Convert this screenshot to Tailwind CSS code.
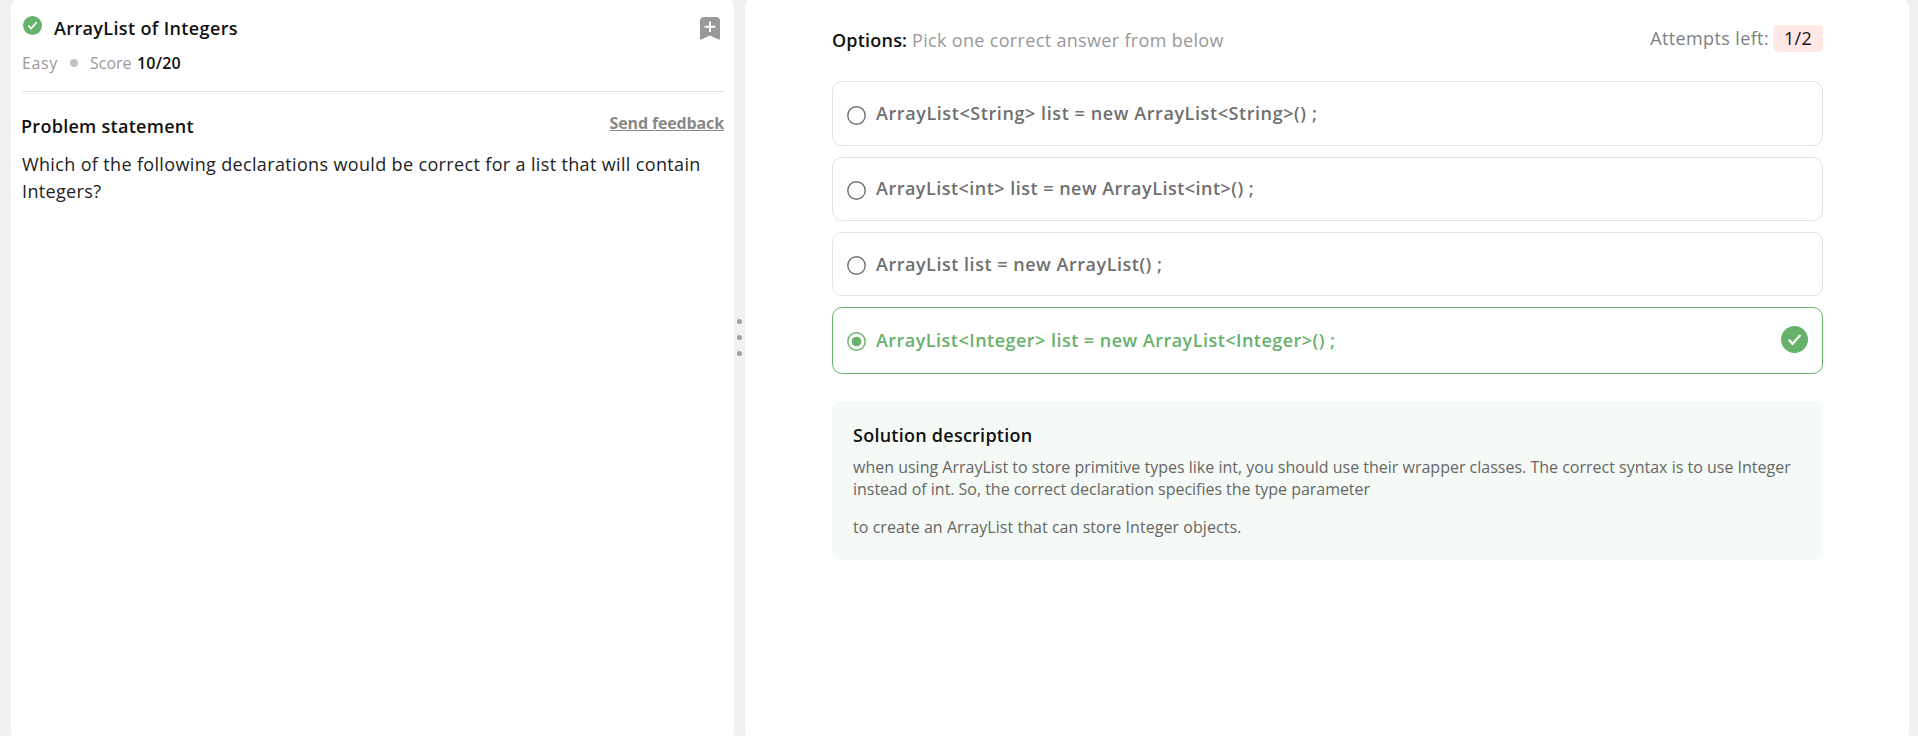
<!DOCTYPE html>
<html lang="en">
<head>
<meta charset="utf-8">
<title>ArrayList of Integers</title>
<script src="https://cdn.jsdelivr.net/npm/@tailwindcss/browser@4"></script>
</head>
<body class="h-screen overflow-hidden bg-[#f0f2f1] font-['Open_Sans',sans-serif] text-[#111]">
<div class="flex h-[740px] -mt-px pl-[11px] pr-[9px] whitespace-nowrap">

  <!-- Problem panel -->
  <section class="w-[723px] shrink-0 rounded-lg bg-white pl-[11px] pr-[10px] pt-[15px]">
    <header class="flex h-[78px] items-start justify-between border-b border-[#e2e2e2]">
      <div>
        <div class="flex items-start">
          <svg class="ml-px mt-[2px] size-[19px]" viewBox="0 0 27 27" fill="none"><circle cx="13.5" cy="13.5" r="13.5" fill="#66b26a"/><path d="M8.3 14.3l3.3 3.4 7.1-8.1" stroke="#fff" stroke-width="2.5" stroke-linecap="round"/></svg>
          <h1 class="ml-3 text-[18px] leading-7 font-semibold tracking-[0.36px]">ArrayList of Integers</h1>
        </div>
        <div class="mt-[9px] flex items-center text-[16px] leading-6 text-[#999]">
          <span class="w-12 tracking-[0.6px]">Easy</span>
          <span class="size-2 rounded-full bg-[#c2c2c2]"></span>
          <span class="ml-3 w-[47px]">Score</span>
          <span class="font-semibold tracking-[0.2px] text-[#111]">10/20</span>
        </div>
      </div>
      <svg class="mr-1 mt-[3px] h-[23px] w-5" viewBox="0 0 20 23" fill="none"><path d="M4 0h12a4 4 0 0 1 4 4v17.5q0 1.5-1.5 1L10 18.6l-8.500 3.900Q0 23 0 21.500V4a4 4 0 0 1 4-4z" fill="#999"/><path d="M10 4.500v10.600M4.700 9.800h10.600" stroke="#fff" stroke-width="2"/></svg>
    </header>
    <div class="flex items-start justify-between pt-5">
      <h2 class="mt-px -ml-px text-[18px] leading-[26px] font-semibold tracking-[0.28px]">Problem statement</h2>
      <a class="text-[16px] leading-[22px] font-bold tracking-[-0.14px] text-[#888] underline underline-offset-1 decoration-1">Send feedback</a>
    </div>
    <p class="mt-3 text-[18px] leading-[27px] tracking-[0.35px] text-[#222]">Which of the following declarations would be correct for a list that will contain<br>Integers?</p>
  </section>

  <!-- Resize handle -->
  <div class="flex w-[11px] shrink-0 flex-col items-center gap-[11px] pt-[320px]">
    <span class="size-[5px] rounded-full bg-[#a0a0a0]"></span>
    <span class="size-[5px] rounded-full bg-[#a0a0a0]"></span>
    <span class="size-[5px] rounded-full bg-[#a0a0a0]"></span>
  </div>

  <!-- Answer panel -->
  <section class="flex-1 rounded-lg bg-white pl-[87px] pr-[86px] pt-[26px]">
    <div class="flex h-14 items-start justify-between text-[18px]">
      <p class="mt-px leading-7 tracking-[0.33px] text-[#999]"><span class="inline-block w-[79px] font-semibold tracking-[0.2px] text-[#111]">Options:</span> <span class="-ml-[4px]">Pick one correct answer from below</span></p>
      <p class="flex leading-[26px] tracking-[0.38px] text-[#808080]">Attempts left:<span class="ml-1 flex h-[27px] w-[50px] justify-center rounded-[5px] bg-[#ffe8e6] tracking-[0.3px] text-[#111]">1/2</span></p>
    </div>

    <div class="flex flex-col gap-[11px] text-[18px] leading-7 font-semibold text-[#6f6f6f]">
      <div class="flex h-[65px] items-start rounded-[10px] border border-[#e2e2e2] pl-[14px] pt-[17px]">
        <svg class="mt-[7px] size-[19px]" viewBox="0 0 19 19" fill="none"><circle cx="9.5" cy="9.5" r="8.700" stroke="#6f6f6f" stroke-width="1.4"/></svg>
        <span class="ml-[10px] tracking-[0.58px]">ArrayList&lt;String&gt; list = new ArrayList&lt;String&gt;() ;</span>
      </div>
      <div class="flex h-16 items-start rounded-[10px] border border-[#e2e2e2] pl-[14px] pt-4">
        <svg class="mt-[7px] size-[19px]" viewBox="0 0 19 19" fill="none"><circle cx="9.5" cy="9.5" r="8.700" stroke="#6f6f6f" stroke-width="1.4"/></svg>
        <span class="ml-[10px] tracking-[0.48px]">ArrayList&lt;int&gt; list = new ArrayList&lt;int&gt;() ;</span>
      </div>
      <div class="flex h-16 items-start rounded-[10px] border border-[#e2e2e2] pl-[14px] pt-[17px]">
        <svg class="mt-[6px] size-[19px]" viewBox="0 0 19 19" fill="none"><circle cx="9.5" cy="9.5" r="8.700" stroke="#6f6f6f" stroke-width="1.4"/></svg>
        <span class="ml-[10px] tracking-[0.52px]">ArrayList list = new ArrayList() ;</span>
      </div>
      <div class="flex h-[67px] items-start rounded-[10px] border border-[#66b26a] pl-[14px] pr-[14px] pt-[18px] text-[#66b26a]">
        <svg class="mt-[6px] size-[19px]" viewBox="0 0 19 19" fill="none"><circle cx="9.5" cy="9.5" r="8.700" stroke="#66b26a" stroke-width="1.4"/><circle cx="9.5" cy="9.5" r="4.800" fill="#66b26a"/></svg>
        <span class="ml-[10px] tracking-[0.47px]">ArrayList&lt;Integer&gt; list = new ArrayList&lt;Integer&gt;() ;</span>
        <svg class="ml-auto size-[27px]" viewBox="0 0 27 27" fill="none"><circle cx="13.5" cy="13.5" r="13.5" fill="#66b26a"/><path d="M8.300 14.300l3.200 3.400 7.200-8" stroke="#fff" stroke-width="2.3" stroke-linecap="round"/></svg>
      </div>
    </div>

    <div class="mt-[27px] h-[159px] rounded-[10px] bg-[#f5faf6] pl-[21px] pt-5 text-[16px] leading-[22px] text-[#666]">
      <h3 class="text-[18px] leading-7 font-semibold tracking-[0.25px] text-[#111]">Solution description</h3>
      <p class="mt-[7px]">when using ArrayList to store primitive types like int, you should use their wrapper classes. The correct syntax is to use Integer<br><span class="tracking-[-0.03px]">instead of int. So, the correct declaration specifies the type parameter</span></p>
      <p class="mt-4 tracking-[0.05px]">to create an ArrayList that can store Integer objects.</p>
    </div>
  </section>
</div>
</body>
</html>
